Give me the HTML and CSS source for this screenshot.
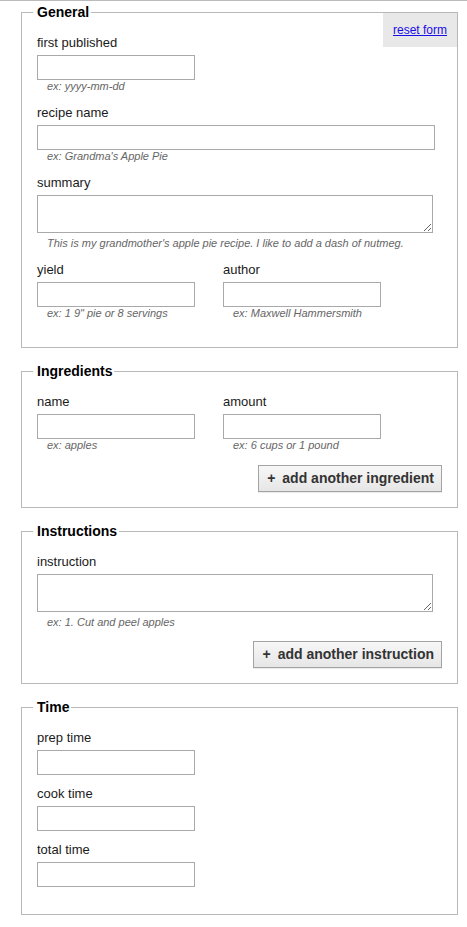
FILE: index.html
```html
<!DOCTYPE html>
<html lang="en">
<head>
<meta charset="utf-8">
<title>Recipe form</title>
<link rel="stylesheet" href="styles.css">
</head>
<body>
<form class="page">
  <fieldset class="section section-general">
    <legend>General</legend>
    <div class="reset"><a href="#">reset form</a></div>
    <div class="field">
      <label>first published</label>
      <input class="input input-short" type="text">
      <div class="hint">ex: yyyy-mm-dd</div>
    </div>
    <div class="field">
      <label>recipe name</label>
      <input class="input input-wide" type="text">
      <div class="hint">ex: Grandma's Apple Pie</div>
    </div>
    <div class="field">
      <label>summary</label>
      <textarea class="textarea"></textarea>
      <div class="hint">This is my grandmother's apple pie recipe. I like to add a dash of nutmeg.</div>
    </div>
    <div class="row">
      <div class="field">
        <label>yield</label>
        <input class="input input-short" type="text">
        <div class="hint">ex: 1 9" pie or 8 servings</div>
      </div>
      <div class="field">
        <label>author</label>
        <input class="input input-short" type="text">
        <div class="hint">ex: Maxwell Hammersmith</div>
      </div>
    </div>
  </fieldset>

  <fieldset class="section">
    <legend>Ingredients</legend>
    <div class="row">
      <div class="field">
        <label>name</label>
        <input class="input input-short" type="text">
        <div class="hint">ex: apples</div>
      </div>
      <div class="field">
        <label>amount</label>
        <input class="input input-short" type="text">
        <div class="hint">ex: 6 cups or 1 pound</div>
      </div>
    </div>
    <div class="actions">
      <button type="button" class="btn"><span class="plus">+</span>add another ingredient</button>
    </div>
  </fieldset>

  <fieldset class="section section-instructions">
    <legend>Instructions</legend>
    <div class="field">
      <label>instruction</label>
      <textarea class="textarea"></textarea>
      <div class="hint">ex: 1. Cut and peel apples</div>
    </div>
    <div class="actions">
      <button type="button" class="btn"><span class="plus">+</span>add another instruction</button>
    </div>
  </fieldset>

  <fieldset class="section section-time">
    <legend>Time</legend>
    <div class="field">
      <label>prep time</label>
      <input class="input input-short" type="text">
    </div>
    <div class="field">
      <label>cook time</label>
      <input class="input input-short" type="text">
    </div>
    <div class="field">
      <label>total time</label>
      <input class="input input-short" type="text">
    </div>
  </fieldset>
</form>
</body>
</html>
```

FILE: styles.css
```css
html, body {
  margin: 0;
  padding: 0;
  background: #ffffff;
}

body {
  font-family: "Liberation Sans", Arial, sans-serif;
  color: #1a1a1a;
}

.page {
  border-top: 1px solid #bbbbbb;
  padding-top: 3px;
  margin: 0;
}

.section {
  position: relative;
  margin: 0 9px 15px 21px;
  padding: 14px 15px 15px 15px;
  border: 1px solid #b8b8b8;
  min-width: 0;
}

.section legend {
  padding: 0 2px 0 4px;
  margin-left: -4px;
  font-weight: bold;
  font-size: 14px;
  line-height: 17px;
  color: #000000;
}

.reset {
  position: absolute;
  top: -8px;
  right: 0;
  padding: 10px;
  background: #e8e8e8;
  font-size: 12px;
  line-height: 14px;
}

.reset a {
  color: #1a0ee8;
  text-decoration: underline;
}

.field {
  margin-bottom: 12px;
}

.field label {
  display: block;
  font-size: 13px;
  line-height: 16px;
  margin-bottom: 4px;
  color: #1a1a1a;
}

.input {
  display: block;
  box-sizing: border-box;
  height: 25px;
  margin: 0;
  padding: 2px 4px;
  border: 1px solid #a9a9a9;
  background: #ffffff;
  font-family: "Liberation Sans", Arial, sans-serif;
  font-size: 13px;
}

.input-short {
  width: 158px;
}

.input-wide {
  width: 398px;
}

.textarea {
  display: block;
  box-sizing: border-box;
  width: 396px;
  height: 38px;
  margin: 0 0 4px 0;
  padding: 2px 4px;
  border: 1px solid #a9a9a9;
  background: #ffffff;
  font-family: "Liberation Sans", Arial, sans-serif;
  font-size: 13px;
}

.hint {
  padding-left: 10px;
  font-size: 11px;
  line-height: 13px;
  font-style: italic;
  color: #666666;
}

.row {
  display: grid;
  grid-template-columns: 186px 186px;
}

.actions {
  display: flex;
  justify-content: flex-end;
  margin-top: 1px;
}

.section-instructions .actions {
  margin-top: 2px;
}

.btn {
  box-sizing: border-box;
  height: 27px;
  margin: 0;
  padding: 0 7px 0 8px;
  border: 1px solid #a3a3a3;
  background: linear-gradient(#f7f7f7, #e6e6e6);
  font-family: "Liberation Sans", Arial, sans-serif;
  font-weight: bold;
  font-size: 14px;
  line-height: 17px;
  color: #333333;
  box-shadow: 0 1px 0 rgba(0, 0, 0, 0.08);
}

.plus {
  margin-right: 7px;
}

.section-time .field {
  margin-bottom: 11px;
}

.section-time .field:last-child {
  margin-bottom: 12px;
}
```
